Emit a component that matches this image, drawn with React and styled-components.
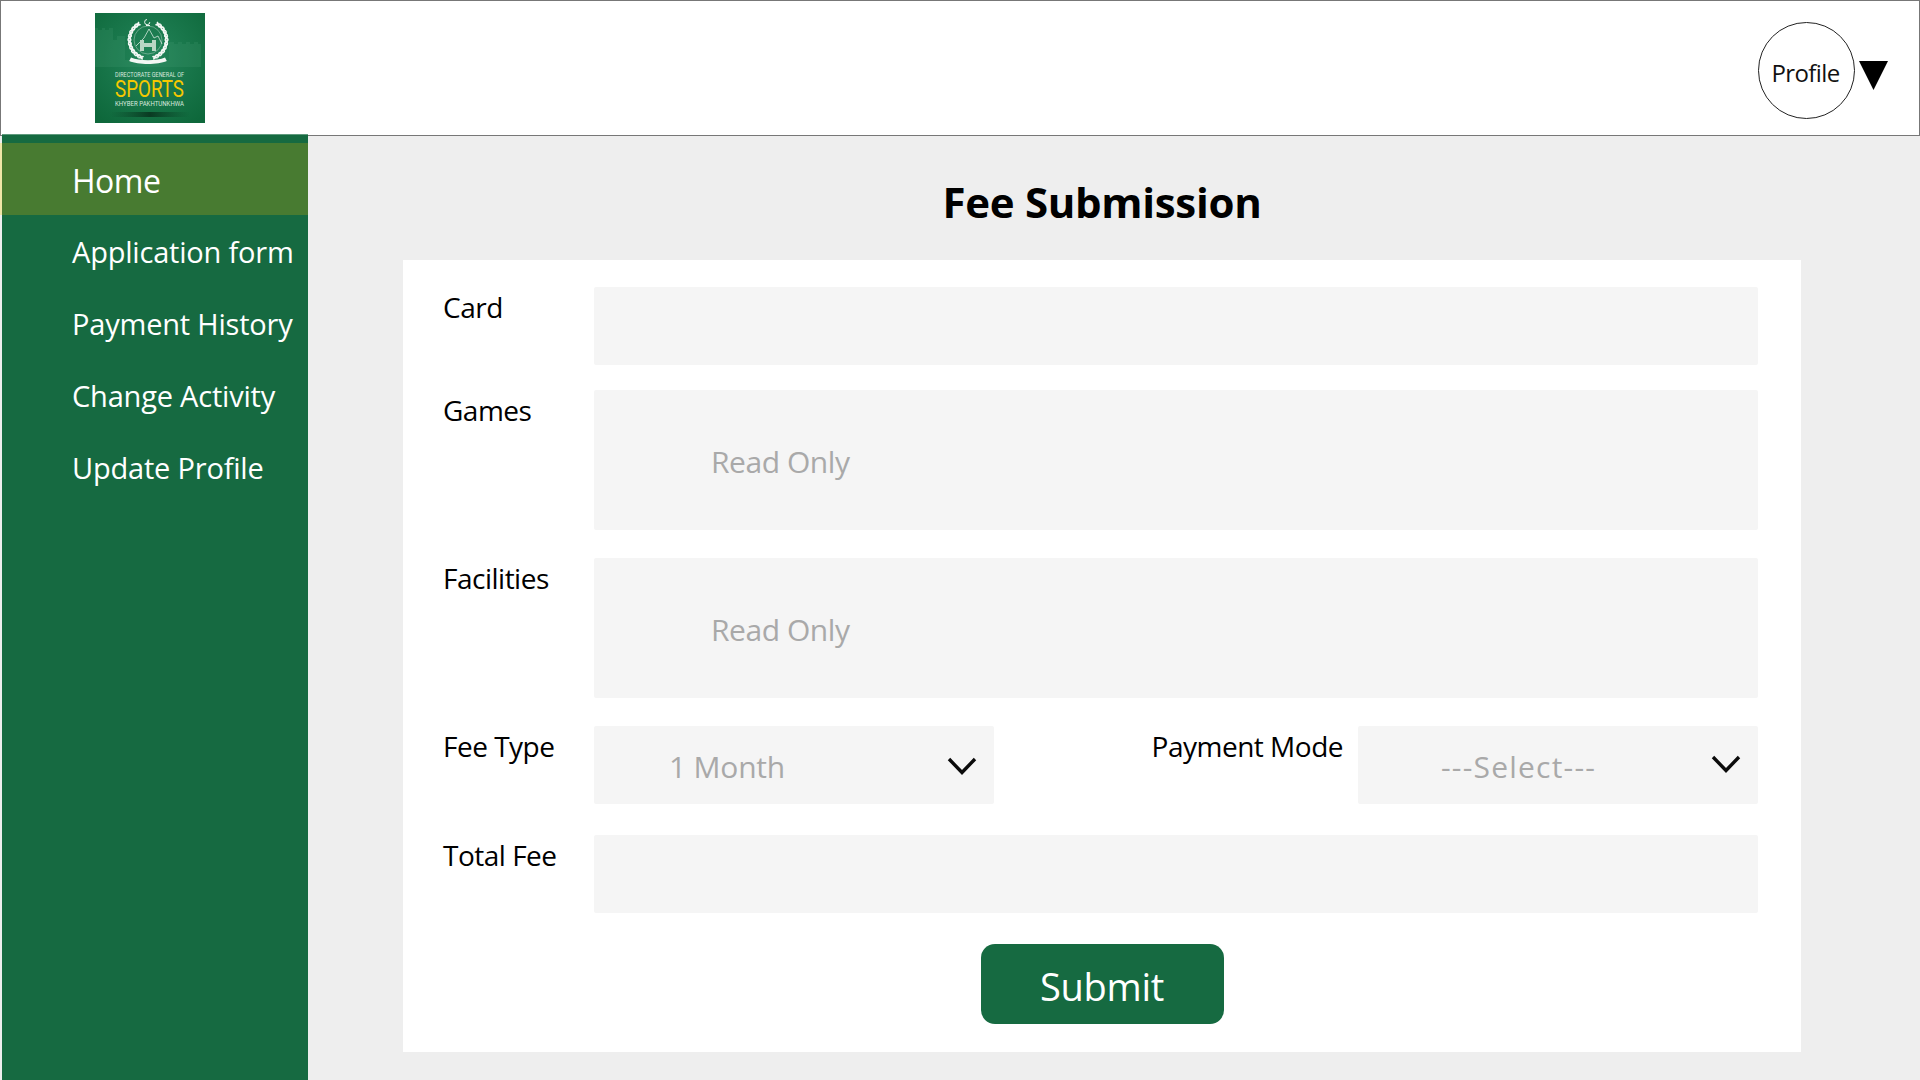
import styled, { createGlobalStyle } from 'styled-components'

const Global = createGlobalStyle`
  html, body { margin: 0; padding: 0; background: #fff; }
  * { box-sizing: border-box; }
`;

const Page = styled.div`
  width: 100%;
  height: 1080px;
  display: flex;
  flex-direction: column;
  overflow: hidden;
  font-family: 'Open Sans', 'Noto Sans', sans-serif;
`;

const Header = styled.header`
  height: 136px;
  flex-shrink: 0;
  display: flex;
  align-items: flex-start;
  justify-content: space-between;
  border: 1px solid #777;
  background: #fff;
  padding: 12px 31px 0 94px;
`;

const ProfileBox = styled.div`
  display: flex;
  align-items: center;
  gap: 4px;
  margin-top: 9px;
`;

const Avatar = styled.div`
  width: 97px;
  height: 97px;
  border: 1px solid #222;
  border-radius: 50%;
  display: flex;
  align-items: center;
  justify-content: center;
  padding: 3px 2px 0 0;
  font-size: 24px;
  font-weight: 500;
  letter-spacing: -0.6px;
  color: #111;
`;

const Caret = styled.svg`
  width: 29px;
  height: 29px;
  margin-top: 9px;
`;

const Body = styled.div`
  flex: 1;
  display: flex;
  min-height: 0;
  background: #eee;
`;

const Sidebar = styled.nav`
  width: 306px;
  margin-left: 2px;
  margin-top: -2px;
  padding-top: 8px;
  flex-shrink: 0;
  background: #166a41;
  border-top: 1px solid #5f9a7d;
`;

const NavItem = styled.a`
  display: flex;
  align-items: center;
  height: 72px;
  padding-left: 70px;
  padding-top: ${p => (p.$active ? '2px' : '0')};
  color: #fff;
  font-size: ${p => (p.$active ? '32px' : '29px')};
  letter-spacing: ${p => (p.$active ? '-0.5px' : '-0.2px')};
  background: ${p => (p.$active ? '#487b31' : 'transparent')};
  box-shadow: ${p => (p.$active ? '-2px 0 0 #efe6a8' : 'none')};
`;

const Main = styled.main`
  flex: 1;
  display: flex;
  flex-direction: column;
  padding: 0 119px 28px 95px;
`;

const Title = styled.h1`
  margin: 0;
  height: 124px;
  display: flex;
  align-items: center;
  justify-content: center;
  padding-top: 6px;
  font-size: 42px;
  font-weight: 700;
  letter-spacing: -0.3px;
  color: #000;
`;

const Card = styled.form`
  flex: 1;
  background: #fff;
  padding: 27px 43px 28px 40px;
  display: flex;
  flex-direction: column;
`;

const Row = styled.div`
  display: flex;
  margin-bottom: ${p => p.$gap}px;
`;

const Label = styled.label`
  flex: 0 0 151px;
  padding-top: 1px;
  font-size: 28px;
  font-weight: 500;
  line-height: 38px;
  letter-spacing: -0.5px;
  color: #000;
  white-space: nowrap;
`;

const SideLabel = styled(Label)`
  flex: 1;
  padding-right: 15px;
  text-align: right;
`;

const Field = styled.input`
  flex: 1;
  min-width: 0;
  height: ${p => p.$height || 78}px;
  border: none;
  outline: none;
  border-radius: 2px;
  background: #f5f5f5;
  padding: 2px 0 0 117px;
  font-family: inherit;
  font-size: 30px;
  letter-spacing: -0.45px;
  &::placeholder { color: #a9a9a9; opacity: 1; }
`;

const SelectBox = styled.div`
  position: relative;
  flex: 0 0 400px;
  height: 78px;
  border-radius: 2px;
  background: #f5f5f5;
  display: flex;
  align-items: center;
  padding: 2px 0 0 ${p => p.$pad}px;
  font-size: 30px;
  letter-spacing: ${p => p.$tracking}px;
  color: #a9a9a9;
`;

const Chevron = styled.svg`
  position: absolute;
  right: 17px;
  top: ${p => p.$top}px;
  width: 30px;
  height: 18px;
`;

const SubmitRow = styled.div`
  display: flex;
  justify-content: center;
  padding-left: 3px;
`;

const Submit = styled.button`
  width: 243px;
  height: 80px;
  border: none;
  border-radius: 14px;
  background: #166a41;
  color: #fff;
  padding-top: 4px;
  font-family: inherit;
  font-size: 38px;
  letter-spacing: -0.3px;
`;

function ChevronIcon({ top }) {
  return (
    <Chevron $top={top} viewBox="0 0 30 18">
      <path d="M2 2 L15 15.5 L28 2" fill="none" stroke="#0b0b0b" strokeWidth="3.4" />
    </Chevron>
  )
}

// leaves of the wreath, walking up each side of the ring
const leaves = [];
for (let i = 0; i < 11; i++) {
  const t = 22 + i * 12.5;
  const a = (t * Math.PI) / 180;
  [-1, 1].forEach(side => {
    const x = 53 + side * 18.5 * Math.sin(a);
    const y = 27 + 18.5 * Math.cos(a);
    [-38, 38].forEach(o => {
      leaves.push({ x, y, r: -side * t + o });
    });
  });
}

function Logo() {
  return (
    <svg width="110" height="110" viewBox="0 0 110 110">
      <defs>
        <radialGradient id="logoBg" cx="50%" cy="40%" r="72%">
          <stop offset="0%" stopColor="#23855a" />
          <stop offset="100%" stopColor="#0e683b" />
        </radialGradient>
        <linearGradient id="logoShadow" x1="0" x2="1">
          <stop offset="0" stopColor="#0b4a2a" stopOpacity="0" />
          <stop offset="0.5" stopColor="#0a3a22" />
          <stop offset="1" stopColor="#0b4a2a" stopOpacity="0" />
        </linearGradient>
      </defs>
      <rect width="110" height="110" fill="url(#logoBg)" />
      {/* fort behind the emblem */}
      <path d="M0 15h3v2h4v-2h3v2h4v-2h4v12h4v-4h8v24h44v-18h5v2h4v-2h4v2h4v-2h4v2h4v-2h4v2h3v23H0z" fill="#4aa078" opacity="0.2" />
      <g fill="#f3f7f4">
        {leaves.map((l, i) => (
          <ellipse key={i} cx={l.x} cy={l.y} rx="3" ry="1.1" transform={`rotate(${l.r} ${l.x} ${l.y})`} />
        ))}
      </g>
      <g fill="none" stroke="#eaf3ed">
        <circle cx="53" cy="27" r="14" strokeWidth="0.5" opacity="0.7" />
        <path d="M41 33l8-8 5-9 5 9 4-2 4 8" strokeWidth="0.7" />
        <path d="M52 6.500a2.600 2.600 0 1 0 2.800 2.600" strokeWidth="1" />
        <path d="M51 12.500h4" strokeWidth="1" />
      </g>
      <path d="M45 27h4v3h8v-3h4v11h-4v-4h-8v4h-4z" fill="#b9d6c4" />
      <path d="M36 44.500c8 3.500 26 3.500 34 0l1.800 3.500c-9 4-28.600 4-37.600 0z" fill="#f3f7f4" />
      <text x="54.500" y="64" textAnchor="middle" fill="#d8e8de" fontFamily="Roboto, sans-serif" fontSize="6.600" textLength="69" lengthAdjust="spacingAndGlyphs">DIRECTORATE GENERAL OF</text>
      <text x="54.500" y="84" textAnchor="middle" fill="#f6c800" fontFamily="Roboto, sans-serif" fontSize="24" textLength="69" lengthAdjust="spacingAndGlyphs">SPORTS</text>
      <text x="54.500" y="93" textAnchor="middle" fill="#d8e8de" fontFamily="Roboto, sans-serif" fontSize="6.600" textLength="69" lengthAdjust="spacingAndGlyphs">KHYBER PAKHTUNKHWA</text>
      <rect x="15" y="99" width="80" height="5" fill="url(#logoShadow)" />
    </svg>
  )
}

const navLinks = ['Application form', 'Payment History', 'Change Activity', 'Update Profile'];

function App() {
  return (
    <>
      <Global />
      <Page>
        <Header>
          <Logo />
          <ProfileBox>
            <Avatar>Profile</Avatar>
            <Caret viewBox="0 0 29 29">
              <path d="M0 0H29L14.500 29z" fill="#000" />
            </Caret>
          </ProfileBox>
        </Header>
        <Body>
          <Sidebar>
            <NavItem $active>Home</NavItem>
            {navLinks.map(l => <NavItem key={l}>{l}</NavItem>)}
          </Sidebar>
          <Main>
            <Title>Fee Submission</Title>
            <Card>
              <Row $gap={25}>
                <Label>Card</Label>
                <Field />
              </Row>
              <Row $gap={28}>
                <Label>Games</Label>
                <Field $height={140} placeholder="Read Only" readOnly />
              </Row>
              <Row $gap={28}>
                <Label>Facilities</Label>
                <Field $height={140} placeholder="Read Only" readOnly />
              </Row>
              <Row $gap={31}>
                <Label>Fee Type</Label>
                <SelectBox $pad={75} $tracking={-0.2}>
                  1 Month
                  <ChevronIcon top={31} />
                </SelectBox>
                <SideLabel>Payment Mode</SideLabel>
                <SelectBox $pad={83} $tracking={1.2}>
                  ---Select---
                  <ChevronIcon top={29} />
                </SelectBox>
              </Row>
              <Row $gap={31}>
                <Label>Total Fee</Label>
                <Field />
              </Row>
              <SubmitRow>
                <Submit type="button">Submit</Submit>
              </SubmitRow>
            </Card>
          </Main>
        </Body>
      </Page>
    </>
  )
}

export default App
